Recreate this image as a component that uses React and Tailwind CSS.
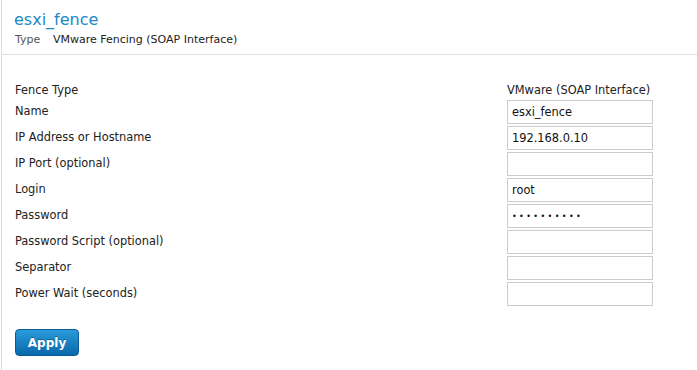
const fields = [
  { label: "Name", value: "esxi_fence" },
  { label: "IP Address or Hostname", value: "192.168.0.10" },
  { label: "IP Port (optional)", value: "" },
  { label: "Login", value: "root" },
  { label: "Password", value: "secret1234", type: "password" },
  { label: "Password Script (optional)", value: "" },
  { label: "Separator", value: "" },
  { label: "Power Wait (seconds)", value: "" },
];

function App() {
  return (
    <div className="ml-px min-h-[370px] border-l border-[#dcdcdc] bg-white font-['DejaVu_Sans',sans-serif] text-[#222]">
      <div className="h-[55px] border-b border-[#dddddd] px-[12px] pt-[10px]">
        <h1 className="text-[16px] leading-[20px] text-[#2188c4]">esxi_fence</h1>
        <div className="mt-[3px] flex text-[11px] leading-[14px]">
          <span className="w-[39px] pl-px text-[#555]">Type</span>
          <span className="text-[#222]">VMware Fencing (SOAP Interface)</span>
        </div>
      </div>

      <form className="pl-[13px] pt-[26px]" onSubmit={(e) => e.preventDefault()}>
        <div className="flex h-[19px] items-center text-[11.4px]">
          <span className="w-[492px]">Fence Type</span>
          <span>VMware (SOAP Interface)</span>
        </div>
        {fields.map((f) => (
          <div key={f.label} className="flex h-[26px] text-[11.4px]">
            <label className="flex h-[24px] w-[492px] items-center">{f.label}</label>
            <input
              type={f.type || "text"}
              defaultValue={f.value}
              className={
                f.type === "password"
                  ? "h-[24px] w-[146px] border border-[#cccccc] bg-white px-[4px] text-[8px] tracking-[2.4px] text-[#111] outline-none"
                  : "h-[24px] w-[146px] border border-[#cccccc] bg-white px-[4px] text-[11.4px] text-[#111] outline-none"
              }
            />
          </div>
        ))}
        <button
          type="submit"
          className="mt-[21px] h-[27px] w-[64px] rounded-[4px] border border-[#0b5c96] bg-gradient-to-b from-[#2a9bdb] to-[#0868aa] text-[12px] font-bold text-white [text-shadow:0_-1px_0_rgba(0,0,0,0.3)]"
        >
          Apply
        </button>
      </form>
    </div>
  );
}

export default App;
